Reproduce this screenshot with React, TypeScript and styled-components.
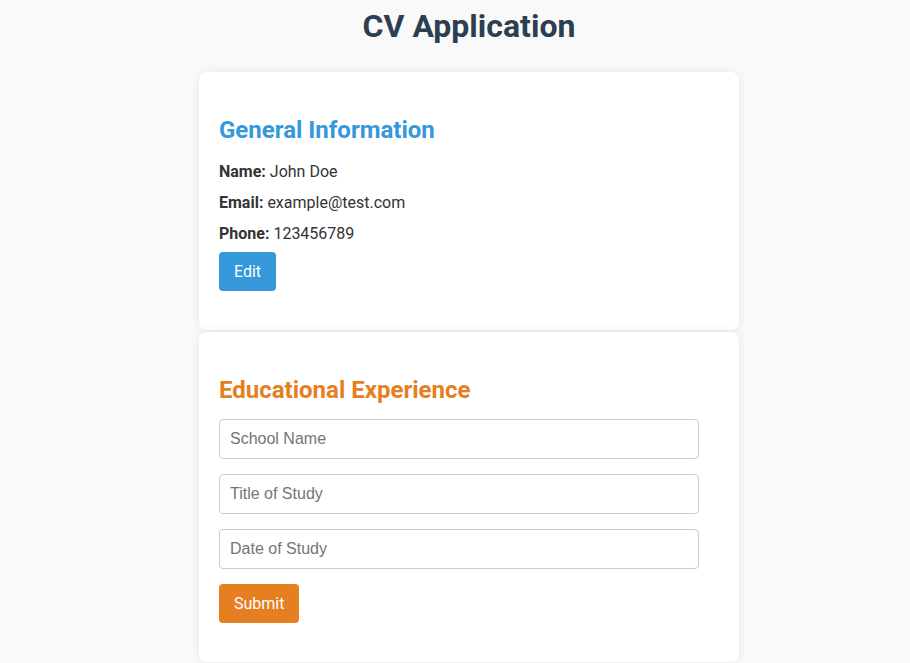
import React from "react";
import styled, { createGlobalStyle } from "styled-components";

const GlobalStyle = createGlobalStyle`
  html, body {
    margin: 0;
    padding: 0;
    background: #f9f9f9;
  }
  body {
    font-family: Roboto, "Liberation Sans", Arial, sans-serif;
    color: #333333;
  }
`;

const Page = styled.div`
  display: flex;
  flex-direction: column;
  align-items: center;
  padding-left: 28px;
`;

const Title = styled.h1`
  margin: 7px 0 27px;
  font-size: 32px;
  font-weight: 700;
  color: #2c3e50;
  line-height: normal;
`;

const Card = styled.section`
  box-sizing: border-box;
  width: 540px;
  padding: 44px 20px 39px;
  background: #ffffff;
  border-radius: 8px;
  box-shadow: 0 0 10px rgba(0, 0, 0, 0.08);
  margin-bottom: 2px;
`;

const Heading = styled.h2<{ $color: string }>`
  margin: 0 0 15px;
  font-size: 24px;
  font-weight: 700;
  line-height: normal;
  color: ${(p) => p.$color};
`;

const Field = styled.p`
  margin: 0 0 5px;
  font-size: 16px;
  line-height: 26px;
`;

const Label = styled.strong`
  font-weight: 700;
`;

const Button = styled.button<{ $bg: string }>`
  display: inline-block;
  margin: 0;
  padding: 10px 15px;
  border: none;
  border-radius: 4px;
  background: ${(p) => p.$bg};
  color: #ffffff;
  font-family: Roboto, "Liberation Sans", Arial, sans-serif;
  font-size: 16px;
  line-height: normal;
  cursor: pointer;
`;

const Form = styled.form`
  display: flex;
  flex-direction: column;
  align-items: flex-start;
  margin-top: 1px;
`;

const Input = styled.input`
  box-sizing: border-box;
  width: 480px;
  height: 40px;
  margin: 0 0 15px;
  padding: 10px;
  border: 1px solid #cccccc;
  border-radius: 4px;
  font-family: "Liberation Sans", Arial, sans-serif;
  font-size: 16px;
  color: #333333;
  &::placeholder {
    color: #757575;
  }
`;

export default function App() {
  return (
    <>
      <GlobalStyle />
      <Page>
        <Title>CV Application</Title>
        <Card>
          <Heading $color="#3498db">General Information</Heading>
          <Field>
            <Label>Name:</Label> John Doe
          </Field>
          <Field>
            <Label>Email:</Label> example@test.com
          </Field>
          <Field>
            <Label>Phone:</Label> 123456789
          </Field>
          <Button type="button" $bg="#3498db">
            Edit
          </Button>
        </Card>
        <Card>
          <Heading $color="#e67e22">Educational Experience</Heading>
          <Form onSubmit={(e) => e.preventDefault()}>
            <Input placeholder="School Name" />
            <Input placeholder="Title of Study" />
            <Input placeholder="Date of Study" />
            <Button type="submit" $bg="#e67e22">
              Submit
            </Button>
          </Form>
        </Card>
      </Page>
    </>
  );
}
